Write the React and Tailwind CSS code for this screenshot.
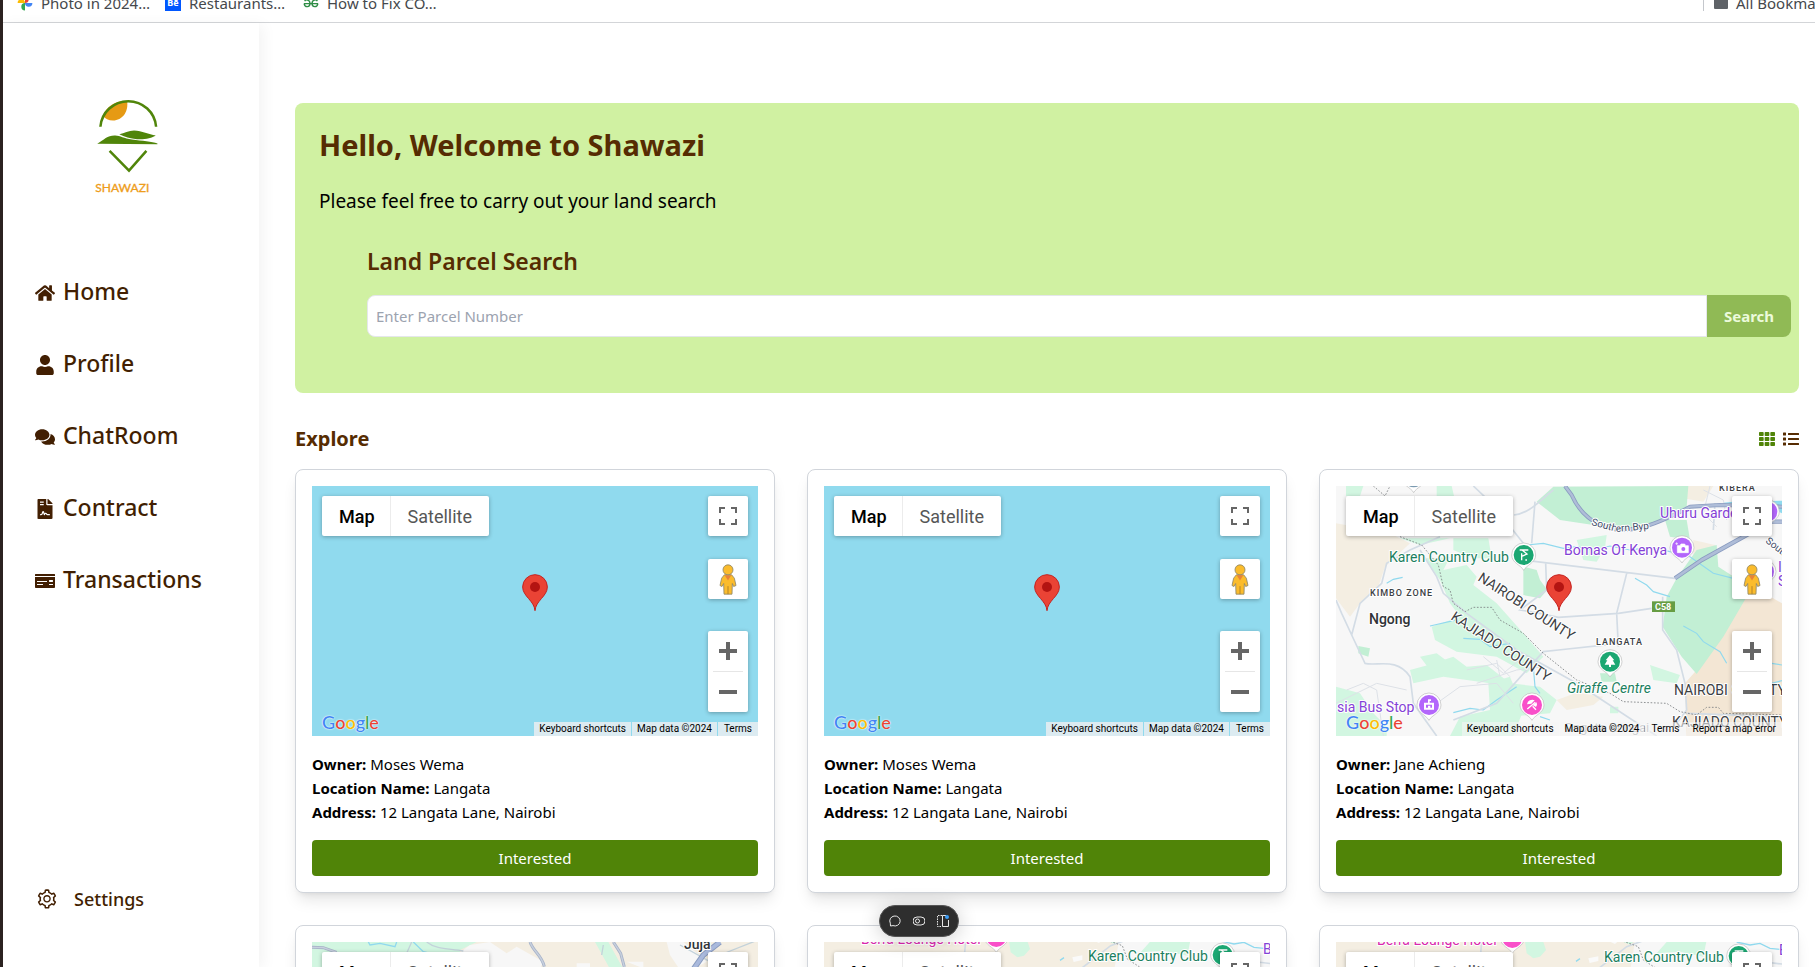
import React from "react";
import { FaHome, FaUser, FaComments, FaFileContract, FaMoneyCheck, FaTh, FaList } from "react-icons/fa";
import { AiOutlineSetting } from "react-icons/ai";

const navItems = [
  { label: "Home", Icon: FaHome },
  { label: "Profile", Icon: FaUser },
  { label: "ChatRoom", Icon: FaComments },
  { label: "Contract", Icon: FaFileContract },
  { label: "Transactions", Icon: FaMoneyCheck },
];

const parcels = [
  { owner: "Moses Wema", map: "water" },
  { owner: "Moses Wema", map: "water" },
  { owner: "Jane Achieng", map: "langata" },
  { owner: "Jane Achieng", map: "juja" },
  { owner: "Jane Achieng", map: "karen" },
  { owner: "Jane Achieng", map: "karenEast" },
];

function PhotosIcon() {
  return (
    <svg viewBox="0 0 16 16" className="size-4 shrink-0" aria-hidden="true">
      <path d="M8 8V.6A3.7 3.7 0 0 1 8 8z" fill="#ea4335" />
      <path d="M8 8h7.4A3.7 3.7 0 0 1 8 8z" fill="#4285f4" />
      <path d="M8 8v7.4A3.7 3.7 0 0 1 8 8z" fill="#34a853" />
      <path d="M8 8H.6A3.7 3.7 0 0 1 8 8z" fill="#fbbc04" />
    </svg>
  );
}

function GeeksIcon() {
  return (
    <svg viewBox="0 0 16 16" className="size-4 shrink-0" aria-hidden="true" fill="none" stroke="#2f8d46" strokeWidth="1.4">
      <path d="M.8 8.6H15.2M1.6 6.2C3 4 6.6 4.6 7 8.2 7 12.6 2 12.8 1.2 8.8M14.4 6.2C13 4 9.4 4.6 9 8.2 9 12.6 14 12.8 14.8 8.8" />
    </svg>
  );
}

function BookmarksBar() {
  return (
    <div className="-mt-4 flex h-[39px] shrink-0 items-center overflow-hidden border-b border-[#d3d5d8] bg-white pl-[14px] text-[15px] whitespace-nowrap text-[#45484c]">
      <a href="#photos" className="flex w-[148px] items-center gap-2">
        <PhotosIcon />
        Photo in 2024…
      </a>
      <a href="#behance" className="flex w-[138px] items-center gap-2">
        <span className="flex size-4 shrink-0 items-center justify-center bg-[#0057ff] text-[9px] font-bold text-white">Bē</span>
        Restaurants…
      </a>
      <a href="#fix" className="flex items-center gap-2">
        <GeeksIcon />
        How to Fix CO…
      </a>
      <a href="#all" className="-mr-[22px] ml-auto flex items-center gap-2">
        <span className="mr-[2px] h-4 w-px bg-[#c4c7cc]" />
        <svg viewBox="0 0 14 12" className="h-3 w-[14px]" aria-hidden="true">
          <path d="M1 0h4l2 2h6a1 1 0 0 1 1 1v8a1 1 0 0 1-1 1H1a1 1 0 0 1-1-1V1a1 1 0 0 1 1-1z" fill="#5f6368" />
        </svg>
        All Bookmarks
      </a>
    </div>
  );
}

function Logo() {
  return (
    <svg viewBox="285 297 190 290" className="ml-[60px] h-[97px] w-16" role="img" aria-label="Shawazi">
      <path d="M308 352C318 326 345 308 380 308C386 340 366 367 338 367C325 367 314 362 308 352z" fill="#e69a14" />
      <path d="M300.500 386A83.500 83 0 0 1 467 386" fill="none" stroke="#50850a" strokeWidth="7.500" />
      <path d="M291 437C312 424 322 411 345 412C360 412 370 421 395 424C425 428 455 430 471 436L471 438z" fill="#50850a" />
      <path d="M357 408C372 405 385 398 401 397C425 398 445 408 466 412C455 420 430 425 410 423C390 420 372 416 357 408z" fill="#50850a" />
      <path d="M328 458L386 517L438 458" fill="none" stroke="#50850a" strokeWidth="7.500" />
      <text x="285" y="582" fontSize="36" fontFamily="Lato, sans-serif" fill="#ee9d1c" stroke="#ee9d1c">SHAWAZI</text>
    </svg>
  );
}

function Sidebar() {
  return (
    <aside className="z-10 flex w-64 shrink-0 flex-col pt-[74px] pb-14 pl-8 text-[#421f02] shadow-[4px_2px_14px_rgba(0,0,0,0.05)]">
      <Logo />
      <nav className="mt-[81px] flex flex-col gap-9">
        {navItems.map(({ label, Icon }) => (
          <a key={label} href={"#" + label.toLowerCase()} className="flex h-9 items-center gap-2 text-[23px] font-medium">
            <Icon className="size-5" />
            <span className="pb-[3px]">{label}</span>
          </a>
        ))}
      </nav>
      <a href="#settings" className="mt-auto flex items-center gap-4 pl-px text-lg leading-6 font-medium">
        <AiOutlineSetting className="size-[22px]" />
        Settings
      </a>
    </aside>
  );
}

function Pin({ x, y, color, children }) {
  return (
    <g transform={`translate(${x} ${y})`}>
      <path d="M0 46C-8 30-36 24-36 0A36 36 0 0 1 36 0C36 24 8 30 0 46z" fill="#fff" stroke="#b9b9b9" strokeWidth="2" />
      <circle r="30" fill={color} />
      {children}
    </g>
  );
}

function Label({ x, y, size = 14, fill = "#3c4043", rotate = 0, children, ...rest }) {
  return (
    <text x={x} y={y} fontSize={size} fill={fill} stroke="#fff" strokeWidth="2" strokeLinejoin="round" paintOrder="stroke" transform={rotate ? `rotate(${rotate} ${x} ${y})` : undefined} {...rest}>
      {children}
    </text>
  );
}

const canvasClass = "absolute inset-0 size-full";

function LangataMap() {
  return (
    <svg viewBox="0 0 446 250" preserveAspectRatio="xMidYMid slice" className={canvasClass} fontFamily="Roboto, sans-serif" aria-hidden="true">
      <g transform="scale(0.33333) translate(-78 -48)">
        <path d="M78 48H1416V798H78z" fill="#f7f7f7" />
        <g fill="#f4eee2">
          <path d="M78 160L240 190L300 220L225 290L205 350L150 400L120 440L78 385z" />
          <path d="M1100 48H1210L1180 95L1120 85z" />
          <path d="M1150 210L1215 225L1220 290L1150 270z" />
          <path d="M740 690L800 668L880 680L850 705L770 720z" />
        </g>
        <path d="M1205 290L1330 350L1416 400V798H1130L1125 640L1160 600z" fill="#f3e6d4" />
        <g fill="#d2f6e1">
          <path d="M108 48H160L150 78H108zM380 48H425L432 78H380zM270 205H420L330 225z" />
          <path d="M430 205H535L545 265L490 265L430 240z" />
          <path d="M345 265L420 262L400 300L470 285L500 320L490 345L560 400L640 490L700 560L650 610L560 560L440 545L375 510L365 470L450 440L420 400L390 330z" />
          <path d="M300 600L355 585L430 560L470 590L530 585L600 640L690 650L740 690L720 730L600 740L590 680L540 640L400 620L310 640z" />
          <path d="M535 640L600 620L640 720L610 798H420L450 740L540 720z" />
          <path d="M78 650L150 670L190 730L230 770V798H78zM120 690L160 720L150 760L110 740z" />
          <path d="M800 210L890 195L885 235L860 275L820 270z" />
          <path d="M1020 585L1110 615L1100 640L1030 630zM900 710h25v20h-25zM330 560l50-10l40 30l-60 20z" />
        </g>
        <g fill="#c2efd4">
          <path d="M680 95L730 50L1135 48L1130 110L1020 165L940 180L850 165L750 150z" />
          <path d="M1065 150L1130 150L1140 210L1080 200z" />
          <path d="M640 290L680 300L690 330L712 360L690 385L640 375z" />
          <path d="M1160 240L1220 225L1225 290L1325 355L1240 500L1160 612L1115 560L1058 470L1070 380L1100 325z" />
          <path d="M145 528L180 535L175 560L145 550zM870 610l45 0l5 25l-45 0z" />
        </g>
        <g fill="none" stroke="#90d9ee" strokeWidth="3.500">
          <path d="M650 225L700 220L760 235L800 230L850 240L900 228L960 240L1020 232L1080 245L1140 260L1210 310L1270 325M975 325L1010 345L1030 365L1080 380M1120 468L1160 490L1180 515L1230 545L1250 580M430 728L480 715L520 720L560 690L620 650M460 505L510 508L540 530L600 520M360 468L440 450L450 458M230 340L250 328L278 322M1240 100L1290 95L1340 105M1385 580L1416 585M1385 640L1416 632M670 590L675 650L690 670M690 740L720 750" />
        </g>
        <path d="M1310 95L1416 92V130L1370 110z" fill="#8fdaee" />
        <g fill="none" stroke="#d3dce5" strokeWidth="5">
          <path d="M490 48L545 100L640 220M612 135C660 130 690 90 730 60M640 270L1095 325M707 280L710 360L630 420L690 430L745 442L925 430L1025 415M950 310L920 430L925 530M430 750L560 700L700 545L745 540L930 520M390 200L300 240L230 280L215 340L150 400L125 495L165 580C200 590 260 560 300 620L310 700L380 798M125 495L95 430L78 390M330 240L380 320L400 370L470 430L620 540L800 640L1040 798" />
          <path d="M1058 380L1058 480L1100 540L1125 640L1130 720L1100 760M1130 730L1416 740M1210 180L1215 100M675 95L665 220" />
        </g>
        <g fill="none" stroke="#dde1e7" strokeWidth="3">
          <path d="M470 600L560 580L600 620M520 560L580 610L640 560M560 570L570 620M500 640L620 600L700 590M110 660L160 640L200 660L220 798M78 700L200 640L290 660M380 700L450 650L560 640L610 700M1180 60L1240 90L1250 150M1200 48L1180 130L1220 170" />
        </g>
        <g fill="none" strokeLinejoin="round">
          <path d="M765 48L785 75C800 110 830 145 870 165C940 195 1010 180 1140 110L1230 105L1416 110" stroke="#8a9cc0" strokeWidth="12" />
          <path d="M765 48L785 75C800 110 830 145 870 165C940 195 1010 180 1140 110L1230 105L1416 110" stroke="#afbdd8" strokeWidth="7" />
          <path d="M1095 325L1175 270L1310 195L1380 155L1416 155" stroke="#8a9cc0" strokeWidth="13" />
          <path d="M1095 325L1175 270L1310 195L1380 155L1416 155" stroke="#afbdd8" strokeWidth="8" />
        </g>
        <path d="M190 48L225 78L240 48M270 200L335 225L385 285L400 350L420 360L430 400L465 425L490 412L545 412L570 450L640 490L700 550L800 630L900 670L940 695L1070 700L1110 725L1160 735L1190 712L1225 712L1240 730L1416 735" fill="none" stroke="#7a7d80" strokeWidth="2.500" strokeDasharray="5 5" />
        <Pin x={311} y={22} color="#7b9ab0" />
        <Pin x={641} y={255} color="#1ba772">
          <path d="M-12-15H14M-5-15L10-3L-6 4M-6-5L-6 16M5 15h5" fill="none" stroke="#fff" strokeWidth="4" />
        </Pin>
        <Pin x={1116} y={233} color="#b366fb">
          <path d="M-14-6h8l3-5h11l3 5h8v21h-33zM-20-12h8M-16-16v8" fill="#fff" stroke="#fff" strokeWidth="2" />
          <circle cx="4" cy="4" r="6" fill="#b366fb" />
        </Pin>
        <Pin x={900} y={575} color="#1ba772">
          <path d="M0-20L13-4H8L16 9H3V16H-3V9H-16L-8-4H-13z" fill="#fff" />
        </Pin>
        <Pin x={357} y={705} color="#b366fb">
          <path d="M-15-7H-3V-17H6V-12H2V-7H15V14H-15zM-9-1V8H9V-1zM-3 8V2H4V8z" fill="#fff" fillRule="evenodd" />
        </Pin>
        <Pin x={666} y={705} color="#f94fc9">
          <path d="M-15-2A16 16 0 0 1 8-14L-2-4zM2 0L14-8A15 15 0 0 1 12 6z" fill="#fff" />
          <path d="M-14 12L10-8M2 4L12 14" fill="none" stroke="#fff" strokeWidth="4" />
        </Pin>
        <Pin x={1372} y={125} color="#b366fb" />
        <Pin x={1362} y={305} color="#b366fb" />
        <path d="M1026 394H1095V426H1026z" fill="#679d43" />
      </g>
      <Label x={383} y={5} size={9} letterSpacing="1" fontWeight="500">KIBERA</Label>
      <Label x={34} y={110} size={9} letterSpacing="1" fontWeight="500">KIMBO ZONE</Label>
      <Label x={260} y={159} size={9} letterSpacing="1" fontWeight="500">LANGATA</Label>
      <Label x={33} y={138} fontWeight="500" fill="#2f3337">Ngong</Label>
      <Label x={53} y={76} fill="#1b8060">Karen Country Club</Label>
      <Label x={228} y={69} fill="#8442d6">Bomas Of Kenya</Label>
      <Label x={324} y={32} fill="#8442d6">Uhuru Garde</Label>
      <Label x={231} y={207} fill="#1b8060" fontStyle="italic">Giraffe Centre</Label>
      <Label x={1} y={226} fill="#8442d6">sia Bus Stop</Label>
      <Label x={442} y={86} fill="#8442d6">I</Label>
      <Label x={442} y={100} fill="#8442d6">S</Label>
      <Label x={141} y={94} rotate={33}>NAIROBI COUNTY</Label>
      <Label x={114} y={133} rotate={33}>KAJIADO COUNTY</Label>
      <Label x={338} y={209}>NAIROBI COUNTY</Label>
      <Label x={336} y={241}>KAJIADO COUNTY</Label>
      <Label x={228} y={246} size={13} fill="#9a9da0">Ongata Rongai</Label>
      <Label x={255} y={39} size={10} rotate={15} fill="#3b4a66">South</Label>
      <Label x={280} y={46} size={10} rotate={-5} fill="#3b4a66">ern Byp</Label>
      <Label x={429} y={56} size={10} rotate={38} fill="#3b4a66">South</Label>
      <text x="319" y="124" fontSize="9" fontWeight="700" fill="#fff">C58</text>
    </svg>
  );
}

function JujaMap() {
  return (
    <svg viewBox="0 0 446 250" preserveAspectRatio="xMidYMid slice" className={canvasClass} fontFamily="Roboto, sans-serif" aria-hidden="true">
      <g transform="scale(0.33333) translate(-66 -141)">
        <path d="M66 141H1404V891H66z" fill="#f4eee2" />
        <path d="M66 141H560L510 165L500 891H66zM915 141H955L1010 240H970z" fill="#d2f6e1" />
        <path d="M540 150L600 141L650 175L680 155L760 200L740 240L590 260L500 180zM1130 141H1180L1250 200L1180 240L1140 180zM860 205h40v30h-40zM1010 200h50v20z" fill="#f7f7f7" />
        <path d="M235 141L240 150L270 145L315 155L320 141M370 141L400 170L440 180" fill="none" stroke="#90d9ee" strokeWidth="4" />
        <path d="M410 141C440 165 480 160 520 168M365 141L350 175M940 150L935 180M1170 150L1260 200M1290 180L1404 135" fill="none" stroke="#c3d2da" strokeWidth="4" />
        <g fill="none">
          <path d="M66 157L100 158L140 172M720 141C730 170 755 180 763 215M970 141L992 175L1003 216" stroke="#a7b3c8" strokeWidth="9" />
          <path d="M66 157L100 158L140 172M720 141C730 170 755 180 763 215M970 141L992 175L1003 216" stroke="#c8d0de" strokeWidth="4" />
          <path d="M1290 141L1240 180L1205 230" stroke="#8a9cc0" strokeWidth="17" />
          <path d="M1290 141L1240 180L1205 230" stroke="#a9b9dc" strokeWidth="11" />
        </g>
      </g>
      <Label x={372} y={7} fontWeight="500" fill="#2f3337">Juja</Label>
    </svg>
  );
}

function KarenMap({ shiftX, shiftY }) {
  return (
    <svg viewBox="0 0 446 250" preserveAspectRatio="xMidYMid slice" className={canvasClass} fontFamily="Roboto, sans-serif" aria-hidden="true">
      <path d="M0 0H446V250H0z" fill="#f4eee2" />
      <g transform={`translate(${shiftX} ${shiftY})`}>
        <g transform="scale(0.33333) translate(-78 -156)">
          <path d="M980 120H1440V891H860z" fill="#f7f7f7" />
          <path d="M645 155L700 156L708 180L690 200L670 205L650 190zM1070 156L1190 150L1180 200L1110 185L1040 190zM940 156l30 0l-10 8z" fill="#d2f6e1" />
          <path d="M890 150l40-2l-15 14zM835 205l30-6v14l-26 6z" fill="#fafafa" />
          <path d="M860 240L950 170L1000 152M515 156L512 190M1316 210L1440 225" fill="none" stroke="#d3dce5" strokeWidth="5" />
          <path d="M798 214l12-8M1280 156L1320 165L1350 160L1380 175L1410 178" fill="none" stroke="#90d9ee" strokeWidth="4" />
          <path d="M930 150L985 170L1000 210L1040 236" fill="none" stroke="#7a7d80" strokeWidth="2.500" strokeDasharray="5 5" />
          <Pin x={607} y={144} color="#f94fc9" />
          <Pin x={1286} y={198} color="#1ba772">
            <path d="M-12-15H14M-5-15L10-3L-6 4M-6-5L-6 16" fill="none" stroke="#fff" strokeWidth="4" />
          </Pin>
        </g>
        <Label x={41} y={3} fill="#d928ad">Berra Lounge Hotel</Label>
        <Label x={443} y={13} fill="#8442d6">B</Label>
        <Label x={268} y={20} fill="#1b8060">Karen Country Club</Label>
      </g>
    </svg>
  );
}

function Pegman() {
  return (
    <svg viewBox="0 0 54 92" className="h-[31px] w-[18px]" aria-hidden="true">
      <path d="M16 32L38 32L46 42L51 64L44 67L40 58L39 90H15L14 58L9 67L3 64L8 42z" fill="#fbbc2c" stroke="#8d8568" strokeWidth="2.500" />
      <path d="M27 66V90" stroke="#a4792a" strokeWidth="2.500" />
      <path d="M17 33H37L27 49z" fill="#e8833a" />
      <circle cx="27" cy="17" r="15" fill="#fbbc2c" stroke="#8d8568" strokeWidth="2.500" />
    </svg>
  );
}

function MapView({ kind }) {
  const water = kind === "water";
  const foot = water ? "bg-[#dcebf1]" : "bg-[#f5f5f5]/60";
  const control = "absolute right-[10px] flex size-10 items-center justify-center rounded-xs bg-white shadow-[0_1px_4px_rgba(0,0,0,0.3)]";
  return (
    <div className="relative h-[250px] overflow-hidden bg-[#90daee] font-[Roboto,sans-serif]">
      {kind === "langata" && <LangataMap />}
      {kind === "juja" && <JujaMap />}
      {kind === "karen" && <KarenMap shiftX={-4} shiftY={-1} />}
      {kind === "karenEast" && <KarenMap shiftX={0} shiftY={0} />}
      <div className="absolute top-[10px] left-[10px] flex h-10 rounded-xs bg-white text-lg leading-10 shadow-[0_1px_4px_rgba(0,0,0,0.3)]">
        <button type="button" className="pt-px pr-[15px] pl-[17px] font-medium text-black">Map</button>
        <button type="button" className="border-l border-[#ececec] px-[17px] pt-px text-[#565656]">Satellite</button>
      </div>
      <button type="button" aria-label="Toggle fullscreen view" className={control + " top-[10px]"}>
        <svg viewBox="0 0 18 18" className="size-[18px]" fill="#666" aria-hidden="true">
          <path d="M0 0v6h2V2h4V0zM16 0h-4v2h4v4h2V0zM16 16h-4v2h6v-6h-2zM2 12H0v6h6v-2H2z" />
        </svg>
      </button>
      <button type="button" aria-label="Street View" className={control + " top-[73px]"}>
        <Pegman />
      </button>
      <div className="absolute right-[10px] bottom-6 flex w-10 flex-col rounded-xs bg-white shadow-[0_1px_4px_rgba(0,0,0,0.3)]">
        <button type="button" aria-label="Zoom in" className="flex h-10 items-center justify-center">
          <svg viewBox="0 0 18 18" className="size-[18px]" fill="#666" aria-hidden="true">
            <path d="M7 0h4v7h7v4h-7v7H7v-7H0V7h7z" />
          </svg>
        </button>
        <span className="mx-[5px] h-px bg-[#e6e6e6]" />
        <button type="button" aria-label="Zoom out" className="flex h-10 items-center justify-center">
          <svg viewBox="0 0 18 18" className="size-[18px]" fill="#666" aria-hidden="true">
            <path d="M0 7h18v4H0z" />
          </svg>
        </button>
      </div>
      {(water || kind === "langata") && (
        <svg viewBox="0 0 78 111" className="absolute top-1/2 left-1/2 -mt-[37px] -ml-[13px] h-[37px] w-[26px]" role="img" aria-label="Parcel location">
          <path d="M39 110C37 80 2 67 2 39A37 37 0 0 1 76 39C76 67 41 80 39 110z" fill="#ea4335" stroke="#c5221f" strokeWidth="3" />
          <circle cx="39" cy="39" r="15" fill="#b31412" />
        </svg>
      )}
      <a href="#google-maps" className="absolute bottom-0 left-[10px] flex font-[Lato,sans-serif] text-lg leading-7 font-medium [text-shadow:0_0_2px_#fff,0_0_1px_#fff]">
        <span className="text-[#4285f4]">G</span>
        <span className="text-[#ea4335]">o</span>
        <span className="text-[#fbbc04]">o</span>
        <span className="text-[#4285f4]">g</span>
        <span className="text-[#34a853]">l</span>
        <span className="text-[#ea4335]">e</span>
      </a>
      <div className="absolute right-0 bottom-0 flex gap-px text-[10px] leading-[14px] text-black">
        <button type="button" className={foot + " px-[5px]"}>Keyboard shortcuts</button>
        <span className={foot + " px-[5px]"}>Map data ©2024</span>
        <a href="#terms" className={foot + " px-[6px]"}>Terms</a>
        {!water && <a href="#report" className={foot + " px-[6px]"}>Report a map error</a>}
      </div>
    </div>
  );
}

function ParcelCard({ owner, map }) {
  return (
    <article className="rounded-lg border border-[#d1d5db] bg-white p-4 shadow-lg">
      <MapView kind={map} />
      <div className="mt-4 text-[15px] leading-6 text-black">
        <p><strong>Owner:</strong> {owner}</p>
        <p><strong>Location Name:</strong> Langata</p>
        <p><strong>Address:</strong> 12 Langata Lane, Nairobi</p>
      </div>
      <button type="button" className="mt-4 h-9 w-full rounded-sm bg-[#508408] text-[15px] text-white">Interested</button>
    </article>
  );
}

function DevToolbar() {
  return (
    <div className="fixed bottom-[30px] left-[879px] z-20 flex h-8 w-20 items-center justify-center gap-3 rounded-full border border-[#555] bg-[#2e2e2e] text-[#e8e8e8] shadow-[0_2px_20px_rgba(0,0,0,0.2)]">
      <button type="button" aria-label="Comments">
        <svg viewBox="0 0 12 12" className="size-3" fill="none" stroke="currentColor" aria-hidden="true">
          <path d="M1.500 11L1.300 8.200A5.200 5 0 1 1 4 10.600z" />
        </svg>
      </button>
      <button type="button" aria-label="Draft mode">
        <svg viewBox="0 0 12 12" className="size-3" fill="none" stroke="currentColor" aria-hidden="true">
          <path d="M4 2h4a4 4 0 0 1 0 8H4a4 4 0 0 1 0-8z" />
          <circle cx="4.500" cy="6" r="2" />
        </svg>
      </button>
      <button type="button" aria-label="Layout shifts">
        <svg viewBox="0 0 12 12" className="size-3" fill="none" stroke="currentColor" aria-hidden="true">
          <path d="M5 .5H.5v11H5" strokeDasharray="1.500 1" />
          <path d="M9 .5H5.500v11h6V5" />
          <circle cx="10" cy="2" r="2" fill="#3b9cf5" stroke="none" />
        </svg>
      </button>
    </div>
  );
}

export default function App() {
  return (
    <div className="flex h-screen flex-col overflow-hidden border-l-3 border-[#2b2220] bg-white font-['Noto_Sans',sans-serif]">
      <BookmarksBar />
      <div className="flex min-h-0 flex-1">
        <Sidebar />
        <main className="min-w-0 flex-1 overflow-y-auto pt-20 pr-4 pb-8 pl-9 [scrollbar-width:none]">
          <section className="rounded-lg bg-[#d0f1a2] pt-6 pr-2 pb-14 pl-6">
            <h1 className="text-[29px] leading-9 font-bold text-[#562c02]">Hello, Welcome to Shawazi</h1>
            <p className="mt-6 text-[19px] leading-7 text-black">Please feel free to carry out your land search</p>
            <form className="mt-[30px] pl-12" onSubmit={(e) => e.preventDefault()}>
              <label htmlFor="parcel" className="block text-[23px] leading-8 font-semibold text-[#562c02]">Land Parcel Search</label>
              <div className="mt-[18px] flex h-[42px]">
                <input id="parcel" type="text" placeholder="Enter Parcel Number" className="min-w-0 flex-1 rounded-l-lg border border-[#e5e7eb] bg-white px-2 text-[15px] placeholder:text-[#9ca3af]" />
                <button type="submit" className="w-[84px] rounded-r-lg bg-[#90ba55] text-[15px] font-bold text-[#ecfadb]">Search</button>
              </div>
            </form>
          </section>
          <div className="mt-8 flex h-7 items-center justify-between">
            <h2 className="text-xl font-bold text-[#562c02]">Explore</h2>
            <div className="flex gap-2">
              <button type="button" aria-label="Grid view" className="text-[#508408]"><FaTh className="size-4" /></button>
              <button type="button" aria-label="List view" className="text-[#562c02]"><FaList className="size-4" /></button>
            </div>
          </div>
          <div className="mt-4 grid grid-cols-3 gap-8">
            {parcels.map((p, i) => (
              <ParcelCard key={i} {...p} />
            ))}
          </div>
        </main>
      </div>
      <DevToolbar />
    </div>
  );
}
